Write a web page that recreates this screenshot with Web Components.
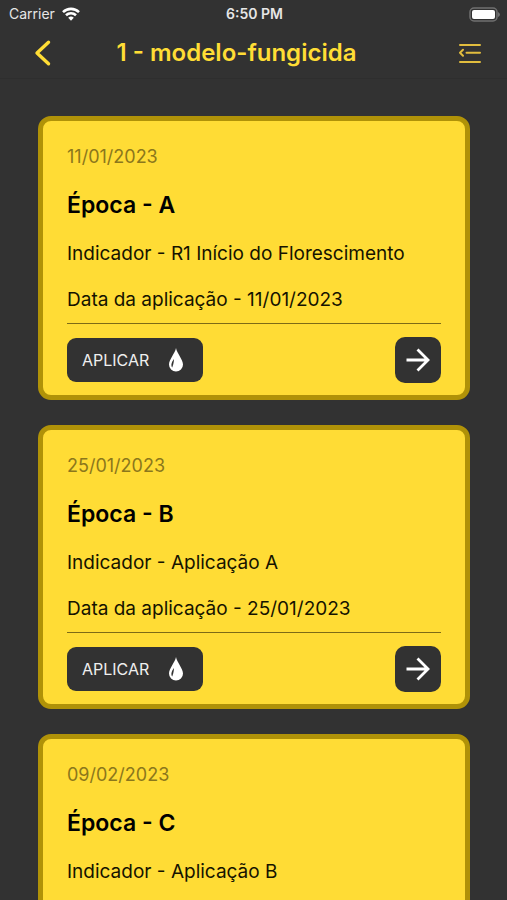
<!DOCTYPE html>
<html lang="pt-BR">
<head>
<meta charset="utf-8">
<meta name="viewport" content="width=device-width, initial-scale=1">
<title>1 - modelo-fungicida</title>
<style>
  html { background: #323232; scrollbar-width: none; }
  body { margin: 0; font-family: Inter, "Liberation Sans", sans-serif; color: #fff; }
</style>
</head>
<body>
<app-screen>
  <status-bar slot="top" carrier="Carrier" time="6:50 PM"></status-bar>
  <nav-header slot="top">1 - modelo-fungicida</nav-header>
  <season-card date="11/01/2023" applied="11/01/2023" indicator="R1 Início do Florescimento">Época - A</season-card>
  <season-card date="25/01/2023" applied="25/01/2023" indicator="Aplicação A">Época - B</season-card>
  <season-card date="09/02/2023" applied="09/02/2023" indicator="Aplicação B">Época - C</season-card>
</app-screen>

<script>
  const define = (name, html, setup) => {
    const template = document.createElement('template');
    template.innerHTML = html;
    customElements.define(name, class extends HTMLElement {
      connectedCallback() {
        if (this.shadowRoot) return;
        this.attachShadow({ mode: 'open' }).append(template.content.cloneNode(true));
        if (setup) setup(this, this.shadowRoot);
      }
    });
  };

  define('app-screen', `
    <style>
      :host { display: flex; flex-direction: column; min-height: 100vh; background: #323232; }
      header { position: sticky; top: 0; background: #323232; }
      main { display: flex; flex-direction: column; gap: 25px; padding: 37px 37px 37px 38px; }
    </style>
    <header><slot name="top"></slot></header>
    <main><slot></slot></main>
  `);

  define('status-bar', `
    <style>
      :host { display: grid; grid-template-columns: 1fr auto 1fr; align-items: center; height: 28px; padding: 0 7px 0 9px; font-size: 14px; line-height: 20px; color: #e6e6e6; }
      .left { display: flex; align-items: center; gap: 6px; }
      .time { font-weight: 600; }
      .battery { justify-self: end; }
      svg { display: block; }
    </style>
    <div class="left">
      <span class="carrier"></span>
      <svg width="20" height="14" viewBox="0 0 18 14" aria-hidden="true">
        <g fill="none" stroke="#fff" stroke-width="2.6"><path d="M1 5.1a11.6 11.6 0 0 1 16 0"/><path d="M4 8.2a7.2 7.2 0 0 1 10 0"/></g>
        <path d="M9 13.8 6.2 10.8a4 4 0 0 1 5.6 0Z" fill="#fff"/>
      </svg>
    </div>
    <span class="time"></span>
    <svg class="battery" width="31" height="15" viewBox="0 0 31 15" aria-hidden="true">
      <rect x="1" y="1" width="27" height="13" rx="4" fill="none" stroke="#707070" stroke-width="1.5"/>
      <rect x="3" y="3" width="23" height="9" rx="2" fill="#fff"/>
      <path d="M29 5q2 1 2 2.5T29 10Z" fill="#707070"/>
    </svg>
  `, (host, root) => {
    root.querySelector('.carrier').textContent = host.getAttribute('carrier');
    root.querySelector('.time').textContent = host.getAttribute('time');
  });

  define('nav-header', `
    <style>
      :host { display: grid; grid-template-columns: 36px 1fr 76px; align-items: center; height: 50px; padding: 0 19px 0 25px; border-bottom: 1px solid #2e2e2e; color: #ffdd35; }
      h1 { margin: 0; font-size: 24px; line-height: 32px; font-weight: 600; text-align: center; white-space: nowrap; }
      button { display: flex; align-items: center; justify-content: center; width: 36px; height: 36px; padding: 0; border: 0; background: none; color: inherit; }
      .menu { justify-self: end; }
    </style>
    <button type="button" aria-label="Voltar">
      <svg width="18" height="28" viewBox="0 0 18 28" fill="none" stroke="currentColor" stroke-width="3.4" stroke-linecap="round" stroke-linejoin="round" aria-hidden="true"><path d="M14.5 3.2 3 14l11.5 10.8"/></svg>
    </button>
    <h1><slot></slot></h1>
    <button class="menu" type="button" aria-label="Menu">
      <svg width="24" height="22" viewBox="0 0 24 22" fill="none" stroke="#e2bd3e" stroke-width="2" stroke-linecap="round" stroke-linejoin="round" aria-hidden="true"><path d="M2 3h20M8.500 10.800H22M2 20h20M5 7.800 2 10.800l3 3"/></svg>
    </button>
  `);

  define('season-card', `
    <style>
      :host { display: block; flex: none; box-sizing: border-box; padding: 24px 24px 12px; border: 5px solid #b09208; border-radius: 13px; background: #ffdc35; color: #151300; font-size: 19px; line-height: 24px; }
      time, h2, p { display: block; margin: 0; }
      time { margin-bottom: 22px; color: #8b771c; font-size: 18px; }
      h2 { margin-bottom: 23px; font-size: 23px; line-height: 28px; font-weight: 600; color: #000; }
      p + p { margin-top: 22px; }
      footer { display: flex; align-items: center; justify-content: space-between; margin-top: 11px; padding-top: 13px; border-top: 1px solid #7d6b16; }
    </style>
    <article>
      <time></time>
      <h2><slot></slot></h2>
      <p>Indicador - <span class="indicator"></span></p>
      <p>Data da aplicação - <span class="applied"></span></p>
      <footer><apply-button></apply-button><open-button></open-button></footer>
    </article>
  `, (host, root) => {
    root.querySelector('time').textContent = host.getAttribute('date');
    root.querySelector('.indicator').textContent = host.getAttribute('indicator');
    root.querySelector('.applied').textContent = host.getAttribute('applied');
  });

  define('apply-button', `
    <style>
      :host { display: block; }
      button { display: flex; align-items: center; gap: 19px; height: 44px; padding: 0 19px 0 15px; border: 0; border-radius: 9px; background: #323232; color: #efefef; font: 400 16px/24px Inter, "Liberation Sans", sans-serif; }
    </style>
    <button type="button">APLICAR
      <svg width="16" height="26" viewBox="0 0 16 26" aria-hidden="true">
        <path d="M8 1C7.200 6 1 12.500 1 17.500a7 7 0 0 0 14 0C15 12.500 8.800 6 8 1Z" fill="#fff"/>
        <path d="M6 12C3.500 15 2.600 18.500 4.200 20.500 5 18.500 6 15 6 12Z" fill="#323232"/>
      </svg>
    </button>
  `);

  define('open-button', `
    <style>
      :host { display: block; }
      button { display: flex; align-items: center; justify-content: center; width: 46px; height: 46px; padding: 0; border: 0; border-radius: 10px; background: #323232; color: #fff; }
    </style>
    <button type="button" aria-label="Abrir">
      <svg width="24" height="24" viewBox="0 0 24 24" fill="none" stroke="currentColor" stroke-width="2.800" aria-hidden="true"><path d="M.5 12h21M11.500 1.500 22 12 11.500 22.500"/></svg>
    </button>
  `);
</script>
</body>
</html>
